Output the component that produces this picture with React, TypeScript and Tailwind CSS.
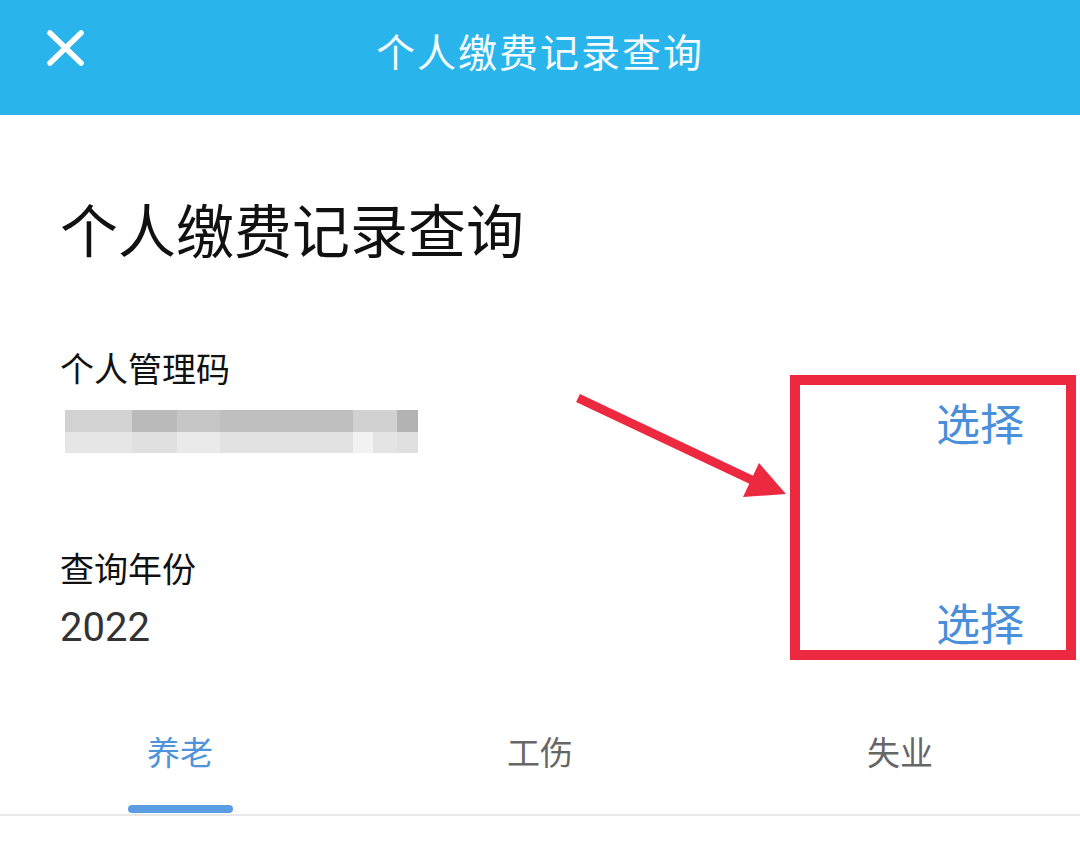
import React from "react";

const cjk = { fontFamily: '"Noto Sans CJK SC", "Noto Sans", sans-serif' };

// mosaic that hides the personal code
const topRow = [
  { w: 67, c: "#d2d2d2" },
  { w: 45, c: "#bababa" },
  { w: 43, c: "#c6c6c6" },
  { w: 133, c: "#bfbfbf" },
  { w: 44, c: "#d1d1d1" },
  { w: 21, c: "#b3b3b3" },
];
const bottomRow = [
  { w: 67, c: "#e6e6e6" },
  { w: 45, c: "#e0e0e0" },
  { w: 43, c: "#eaeaea" },
  { w: 133, c: "#e2e2e2" },
  { w: 20, c: "#f2f2f2" },
  { w: 24, c: "#e4e4e4" },
  { w: 21, c: "#e0e0e0" },
];

function Mosaic() {
  return (
    <div className="ml-[5px] mt-[25px] flex h-[43px] w-[353px] flex-col">
      <div className="flex h-[22px]">
        {topRow.map((b, i) => (
          <div key={i} className="h-full" style={{ width: b.w, background: b.c }} />
        ))}
      </div>
      <div className="flex h-[21px]">
        {bottomRow.map((b, i) => (
          <div key={i} className="h-full" style={{ width: b.w, background: b.c }} />
        ))}
      </div>
    </div>
  );
}

function CloseIcon() {
  return (
    <svg width="40" height="40" viewBox="0 0 40 40" className="ml-[46px] mt-[-2px]">
      <path d="M4 4 L35 34 M35 4 L4 34" stroke="#fff" strokeWidth="5.5" strokeLinecap="round" />
    </svg>
  );
}

export default function App() {
  const tabs = ["养老", "工伤", "失业"];
  return (
    <div className="relative h-[854px] w-[1080px] overflow-hidden bg-white" style={cjk}>
      <header className="grid h-[115px] grid-cols-[1fr_auto_1fr] items-start bg-[#29b5eb] pt-[31px]">
        <CloseIcon />
        <h1 className="text-[39px] leading-none tracking-[2px] text-[#f4fbff]">个人缴费记录查询</h1>
        <div />
      </header>

      <main className="pl-[60px] pr-[56px]">
        <h2 className="mt-[84px] text-[58px] leading-none text-[#111]">个人缴费记录查询</h2>

        <div className="mt-[94px] flex items-start justify-between">
          <div className="flex flex-col">
            <div className="text-[34px] leading-none text-[#111]">个人管理码</div>
            <Mosaic />
          </div>
          <div className="mt-[49px] text-[44px] leading-none text-[#4a8fd9]">选择</div>
        </div>

        <div className="mt-[98px] flex items-start justify-between">
          <div className="flex flex-col">
            <div className="text-[34px] leading-none text-[#111]">查询年份</div>
            <div
              className="mt-[23px] text-[40px] leading-none text-[#333]"
              style={{ fontFamily: "Roboto, sans-serif" }}
            >
              2022
            </div>
          </div>
          <div className="mt-[49px] text-[44px] leading-none text-[#4a8fd9]">选择</div>
        </div>
      </main>

      <nav className="mt-[87px] flex">
        {tabs.map((t, i) => (
          <div key={t} className="flex flex-1 flex-col items-center">
            <div className={"text-[33px] leading-none " + (i === 0 ? "text-[#4f93dc]" : "text-[#666]")}>{t}</div>
            <div className={"mt-[37px] h-[8px] w-[105px] rounded-full " + (i === 0 ? "bg-[#5b9de3]" : "bg-transparent")} />
          </div>
        ))}
      </nav>
      <div className="mt-[1px] h-[2px] w-full bg-[#e8e8e8]" />

      {/* annotation drawn over the screenshot */}
      <div className="pointer-events-none absolute left-[790px] top-[375px] h-[285px] w-[286px] border-[10px] border-[#ed2940]" />
      <svg className="pointer-events-none absolute left-0 top-0" width="1080" height="854">
        <line x1="578" y1="398" x2="756" y2="482" stroke="#ed2940" strokeWidth="9" />
        <polygon points="759,463 743,497 786,494" fill="#ed2940" />
      </svg>
    </div>
  );
}
